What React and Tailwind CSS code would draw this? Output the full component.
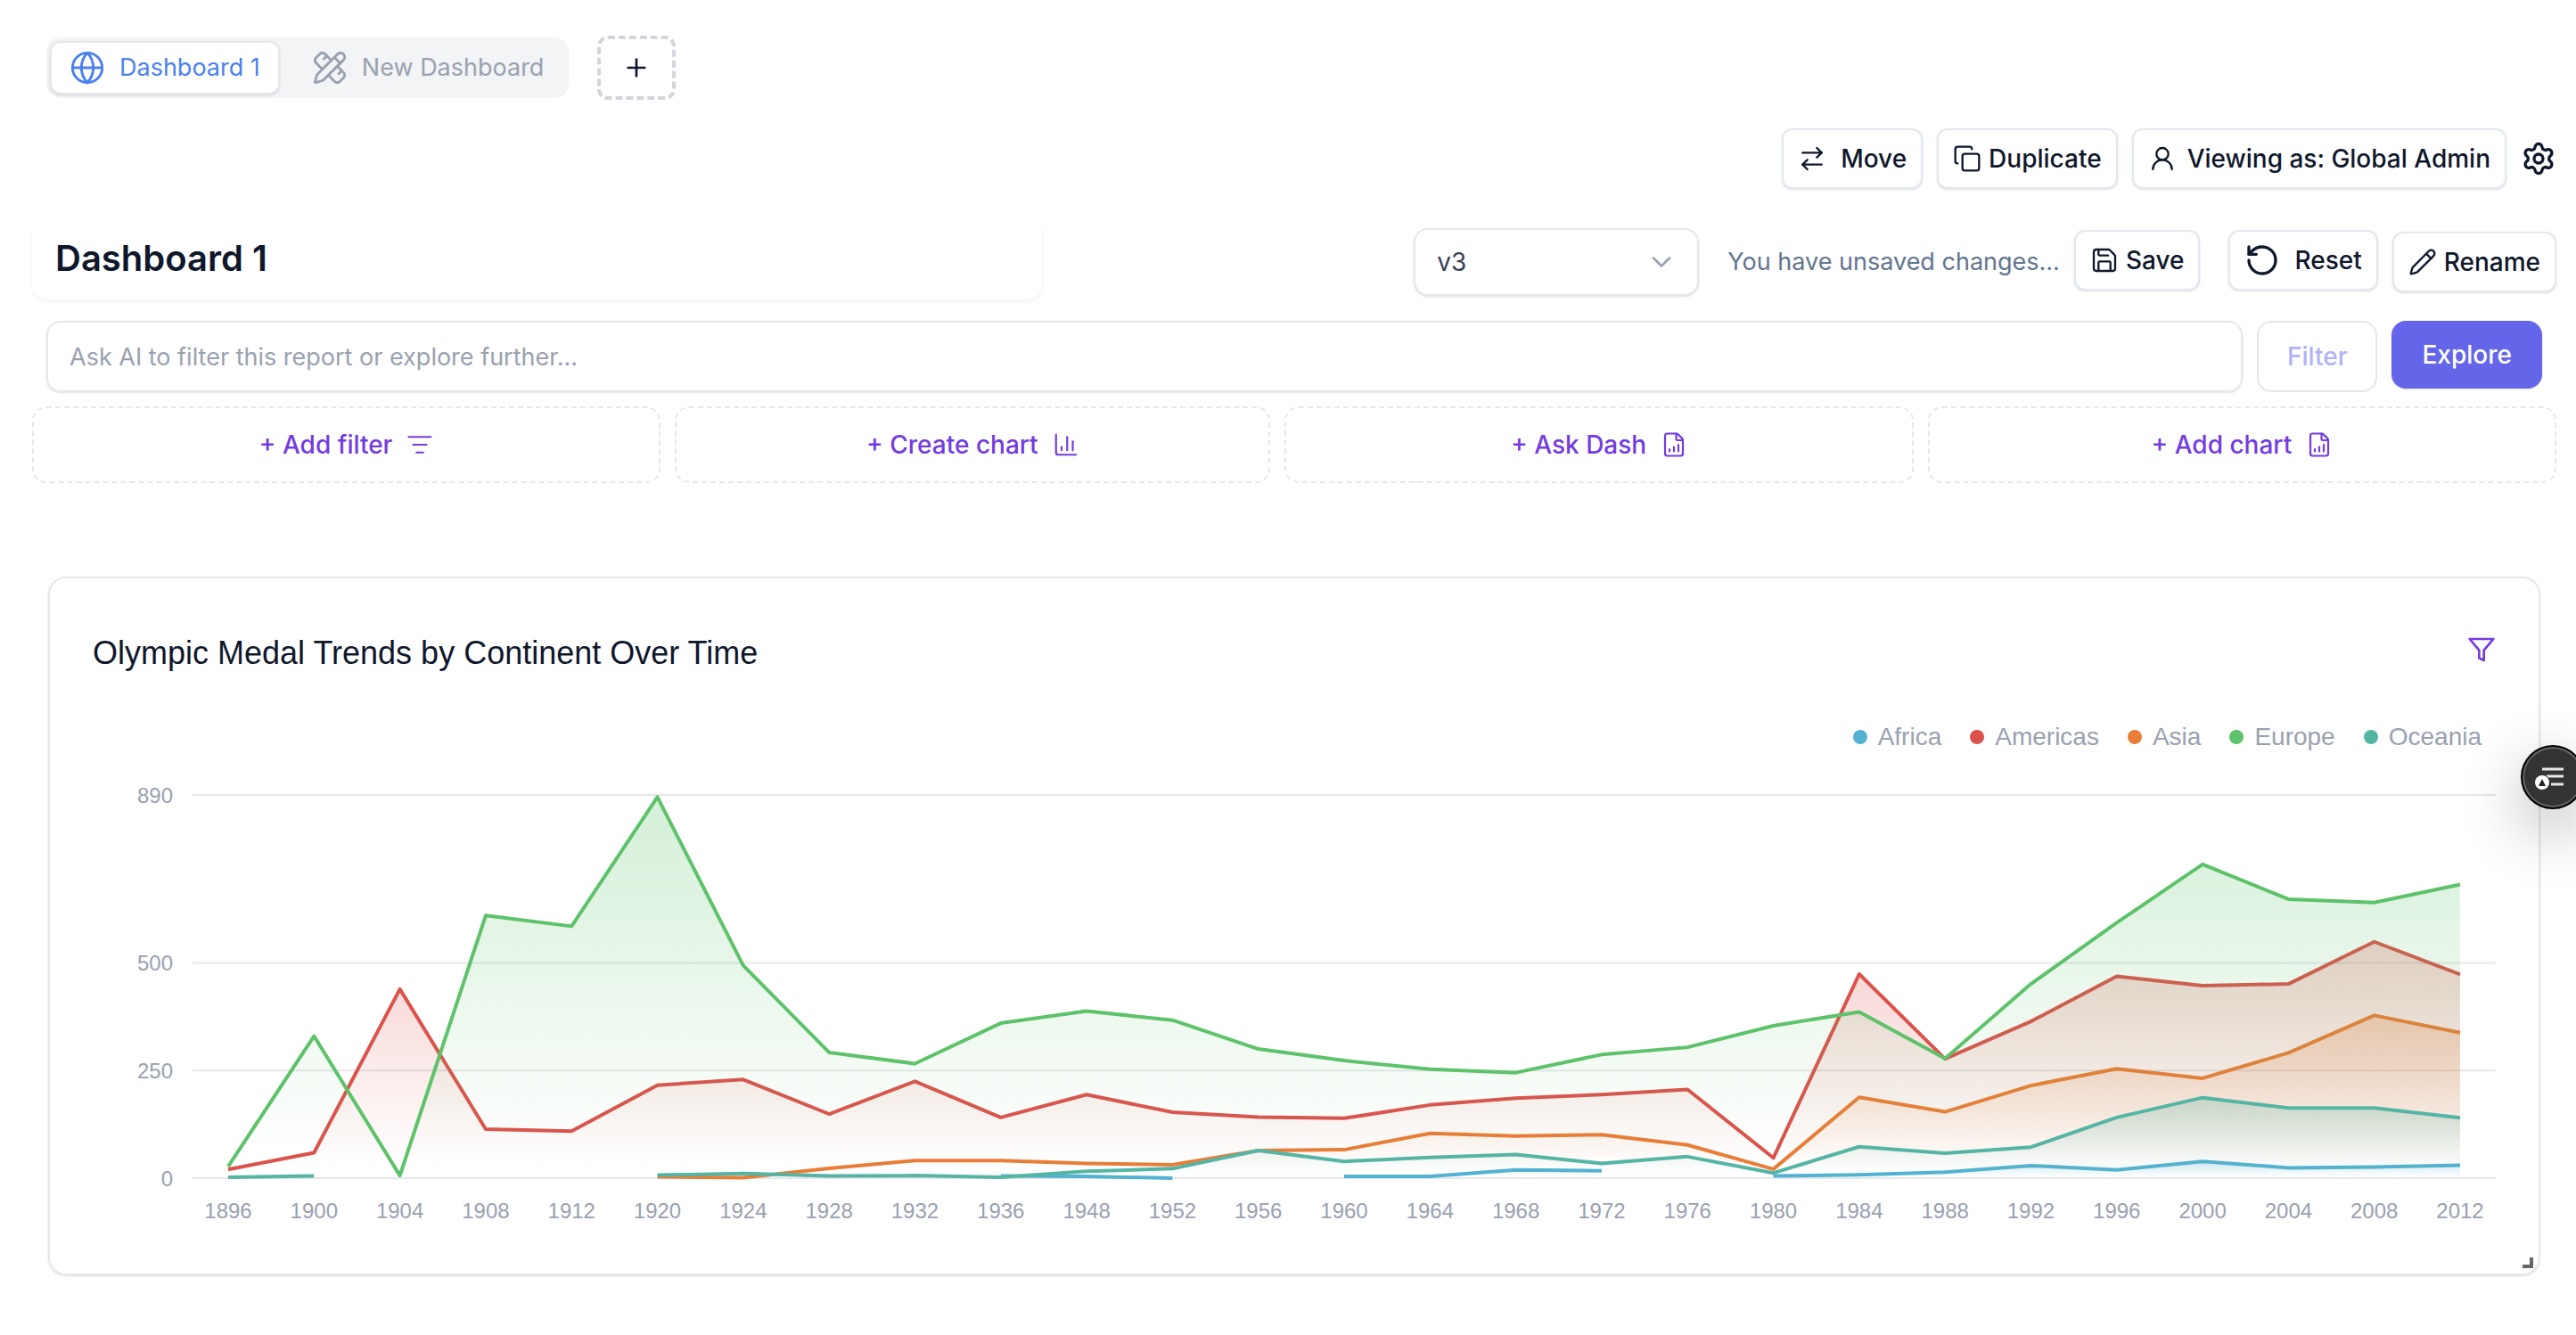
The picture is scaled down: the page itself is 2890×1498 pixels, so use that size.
import React from "react";
import {
  ArrowRightLeft,
  ChartColumn,
  ChevronDown,
  Copy,
  FileChartColumnIncreasing,
  Globe,
  ListFilter,
  Pencil,
  PencilRuler,
  Plus,
  RotateCcw,
  Save,
  Settings,
  UserRound,
} from "lucide-react";

const YEARS = [
  1896, 1900, 1904, 1908, 1912, 1920, 1924, 1928, 1932, 1936, 1948, 1952, 1956,
  1960, 1964, 1968, 1972, 1976, 1980, 1984, 1988, 1992, 1996, 2000, 2004, 2008,
  2012,
];

const N = null;

const SERIES = [
  {
    name: "Africa",
    color: "#53b2d1",
    values: [N, N, N, N, N, N, N, N, N, 5, 4, 0, N, 4, 4, 19, 17, N, 5, 8, 14, 29, 19, 39, 24, 26, 30],
  },
  {
    name: "Americas",
    color: "#dc524c",
    values: [20, 59, 439, 114, 109, 216, 229, 149, 225, 141, 194, 153, 142, 139, 170, 186, 194, 206, 47, 474, 277, 364, 469, 447, 451, 549, 473],
  },
  {
    name: "Asia",
    color: "#e87d37",
    values: [N, 2, N, N, N, 3, 1, 23, 41, 41, 34, 31, 64, 66, 104, 98, 101, 77, 21, 188, 154, 215, 254, 232, 291, 378, 338],
  },
  {
    name: "Europe",
    color: "#5dc269",
    values: [27, 330, 6, 610, 585, 885, 494, 292, 266, 360, 388, 367, 300, 273, 253, 245, 287, 304, 354, 386, 278, 451, 593, 729, 648, 640, 682],
  },
  {
    name: "Oceania",
    color: "#55b5a5",
    values: [2, 5, N, N, N, 7, 11, 5, 6, 2, 16, 22, 64, 39, 48, 55, 34, 50, 12, 73, 58, 72, 141, 187, 163, 163, 140],
  },
];

const PLOT = { left: 112, right: 2696, top: 21, bottom: 451, pad: 40, max: 890 };

const xAt = (i) =>
  PLOT.left +
  PLOT.pad +
  (i * (PLOT.right - PLOT.left - 2 * PLOT.pad)) / (YEARS.length - 1);
const yAt = (v) => PLOT.bottom - (v / PLOT.max) * (PLOT.bottom - PLOT.top);

function segmentsOf(values) {
  const out = [];
  let run = [];
  values.forEach((v, i) => {
    if (v === null) {
      if (run.length) out.push(run);
      run = [];
    } else {
      run.push([xAt(i), yAt(v)]);
    }
  });
  if (run.length) out.push(run);
  return out;
}

const linePath = (segments) =>
  segments.map((s) => "M" + s.map((p) => p.join(",")).join("L") + (s.length === 1 ? "Z" : "")).join("");

const areaPath = (segments) =>
  segments
    .map(
      (s) =>
        `M${s[0][0]},${PLOT.bottom}L` +
        s.map((p) => p.join(",")).join("L") +
        `L${s[s.length - 1][0]},${PLOT.bottom}Z`
    )
    .join("");

function AreaChart() {
  return (
    <svg viewBox="0 0 2696 510" className="block h-auto w-full" role="img" aria-label="Olympic medals by continent">
      <defs>
        {SERIES.map((s) => (
          <linearGradient
            key={s.name}
            id={`fill-${s.name}`}
            gradientUnits="userSpaceOnUse"
            x1="0"
            x2="0"
            y1={yAt(Math.max(...s.values))}
            y2={PLOT.bottom}
          >
            <stop offset="5%" stopColor={s.color} stopOpacity="0.25" />
            <stop offset="95%" stopColor={s.color} stopOpacity="0" />
          </linearGradient>
        ))}
      </defs>
      {[0, 250, 500, 890].map((t) => (
        <g key={t}>
          <line x1={PLOT.left} x2={PLOT.right} y1={yAt(t)} y2={yAt(t)} stroke="#e5e7eb" strokeWidth="2" />
          <text x="90" y={yAt(t) + 9} textAnchor="end" className="fill-gray-400 text-[24px]">
            {t}
          </text>
        </g>
      ))}
      {SERIES.map((s) => {
        const segments = segmentsOf(s.values);
        return (
          <g key={s.name}>
            <path d={areaPath(segments)} fill={`url(#fill-${s.name})`} />
            <path d={linePath(segments)} fill="none" stroke={s.color} strokeWidth="4" strokeLinejoin="round" />
          </g>
        );
      })}
      {YEARS.map((year, i) => (
        <text key={year} x={xAt(i)} y="496" textAnchor="middle" className="fill-gray-400 text-[24px]">
          {year}
        </text>
      ))}
    </svg>
  );
}

function FunnelIcon() {
  return (
    <svg width="32" height="32" viewBox="0 0 24 24" fill="none" stroke="currentColor" strokeWidth="2" strokeLinejoin="round">
      <polygon points="22 3 2 3 10 12.46 10 19 14 21 14 12.46" />
    </svg>
  );
}

function ToolButton({ icon: Icon, size = 32, stroke = 1.75, gap = "gap-4", className = "", children }) {
  return (
    <button
      type="button"
      className={`flex h-[68px] shrink-0 items-center rounded-xl border-2 border-slate-200 bg-white px-4 font-medium whitespace-nowrap shadow-sm ${gap} ${className}`}
    >
      <Icon size={size} strokeWidth={stroke} />
      {children}
    </button>
  );
}

function AddTile({ icon: Icon, children }) {
  return (
    <button
      type="button"
      className="flex h-[86px] items-center justify-center gap-4 rounded-2xl border-2 border-dashed border-slate-200 font-medium text-[#733be0]"
    >
      {children}
      <Icon size={30} strokeWidth={1.75} />
    </button>
  );
}

export default function App() {
  return (
    <div className="min-h-screen overflow-x-hidden bg-white pt-10 pr-[22px] pb-16 pl-9 font-[Inter,sans-serif] text-[28px] leading-10 text-slate-900">
      <nav className="mx-4 flex items-center gap-8 text-[27px]">
        <div className="flex h-[68px] items-center rounded-2xl bg-gray-100 px-1">
          <button
            type="button"
            className="flex h-[60px] items-center gap-4 rounded-xl border-2 border-gray-200 bg-white px-5 text-[#4b80ef] shadow-sm"
          >
            <Globe size={40} strokeWidth={1.75} />
            Dashboard 1
          </button>
          <button type="button" className="flex h-[60px] items-center gap-4 pr-6 pl-9 text-gray-400">
            <PencilRuler size={40} strokeWidth={1.75} />
            New Dashboard
          </button>
        </div>
        <button
          type="button"
          aria-label="Add dashboard"
          className="flex h-[72px] w-[88px] items-center justify-center rounded-xl border-4 border-dashed border-gray-300"
        >
          <Plus size={32} strokeWidth={2} />
        </button>
      </nav>

      <div className="mt-8 flex items-center justify-end gap-4">
        <ToolButton icon={ArrowRightLeft}>Move</ToolButton>
        <ToolButton icon={Copy} gap="gap-2">Duplicate</ToolButton>
        <ToolButton icon={UserRound} gap="gap-3">Viewing as: Global Admin</ToolButton>
        <button type="button" aria-label="Settings">
          <Settings size={40} strokeWidth={2} />
        </button>
      </div>

      <header className="mt-8 flex h-[92px] items-center justify-between">
        <div className="flex h-full w-2/5 items-center rounded-2xl px-[26px] shadow-[0_2px_4px_rgba(0,0,0,0.06)]">
          <h1 className="text-[40px] leading-[48px] font-semibold">Dashboard 1</h1>
        </div>
        <div className="flex items-center pt-1">
          <div className="relative mt-1 mr-8 w-80">
            <select
              aria-label="Version"
              className="h-[76px] w-full appearance-none rounded-2xl border-2 border-gray-200 bg-white pr-16 pl-6 text-gray-700 shadow-sm"
              defaultValue="v3"
            >
              <option>v3</option>
              <option>v2</option>
              <option>v1</option>
            </select>
            <ChevronDown size={36} strokeWidth={1.75} className="pointer-events-none absolute top-5 right-6 text-gray-400" />
          </div>
          <p className="mt-1 mr-4 text-[27px] whitespace-nowrap text-slate-500">You have unsaved changes...</p>
          <ToolButton icon={Save} gap="gap-2" className="mr-8">Save</ToolButton>
          <ToolButton icon={RotateCcw} size={40} stroke={2} className="mr-4">Reset</ToolButton>
          <ToolButton icon={Pencil} gap="gap-2" className="mt-1">Rename</ToolButton>
        </div>
      </header>

      <form className="mx-4 mt-6 flex items-start gap-4" onSubmit={(e) => e.preventDefault()}>
        <input
          type="text"
          aria-label="Ask AI"
          placeholder="Ask AI to filter this report or explore further..."
          className="h-20 min-w-0 flex-1 rounded-2xl border-2 border-gray-200 px-6 text-[27px] shadow-sm placeholder:text-gray-400"
        />
        <button type="button" className="h-20 rounded-2xl border-2 border-gray-200 px-8 font-medium text-[#b1b1f5]">
          Filter
        </button>
        <button type="submit" className="h-[76px] rounded-2xl bg-[#6565e9] px-[34px] font-medium text-white shadow-sm">
          Explore
        </button>
      </form>

      <div className="mt-4 grid grid-cols-[705fr_668fr_705fr_705fr] gap-4">
        <AddTile icon={ListFilter}>+ Add filter</AddTile>
        <AddTile icon={ChartColumn}>+ Create chart</AddTile>
        <AddTile icon={FileChartColumnIncreasing}>+ Ask Dash</AddTile>
        <AddTile icon={FileChartColumnIncreasing}>+ Add chart</AddTile>
      </div>

      <section className="relative mx-[18px] mt-[105px] rounded-[20px] border-2 border-gray-200 px-12 pt-[60px] pb-12 font-['Liberation_Sans',sans-serif] shadow-sm">
        <div className="flex items-start justify-between">
          <h2 className="text-[36px] leading-[48px]">Olympic Medal Trends by Continent Over Time</h2>
          <button type="button" aria-label="Filter chart" className="pt-1 text-[#733be0]">
            <FunnelIcon />
          </button>
        </div>
        <ul className="mt-[50px] flex justify-end gap-8 pr-4 text-gray-400">
          {SERIES.map((s) => (
            <li key={s.name} className="flex items-center gap-3">
              <span className="size-4 rounded-full" style={{ backgroundColor: s.color }} />
              {s.name}
            </li>
          ))}
        </ul>
        <div className="mt-6">
          <AreaChart />
        </div>
        <span className="absolute right-1.5 bottom-1.5 size-3 border-r-4 border-b-4 border-[#666]" />
      </section>

      <button
        type="button"
        aria-label="Open assistant"
        className="fixed top-[836px] -right-2.5 flex size-[72px] items-center justify-center rounded-full border-2 border-black bg-[#333] pr-1.5 shadow-[0_24px_70px_rgba(0,0,0,0.3)] inset-ring-2 inset-ring-[#666]"
      >
        <svg width="36" height="32" viewBox="0 0 36 32">
          <path d="M9 7h24M14 15h19M19 24h14" stroke="#e8e8e8" strokeWidth="3" fill="none" />
          <circle cx="9" cy="22" r="9" fill="#333" />
          <circle cx="9" cy="22" r="8" fill="#fff" />
          <path d="M9 18l4 8H5z" fill="#222" />
        </svg>
      </button>
    </div>
  );
}
